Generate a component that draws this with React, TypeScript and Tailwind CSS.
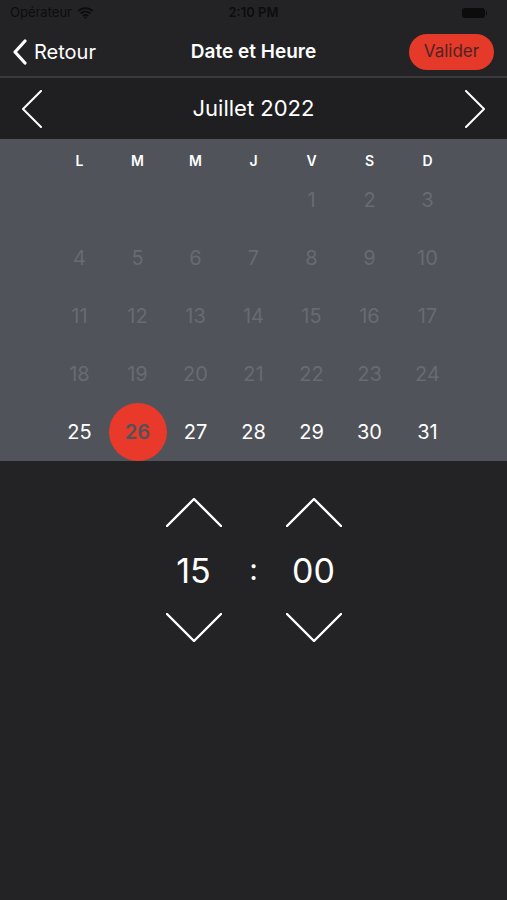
import React from "react";

const days = ["L", "M", "M", "J", "V", "S", "D"];

// July 2022 starts on a Friday (V)
const cells: (number | null)[] = [
  null, null, null, null, 1, 2, 3,
  4, 5, 6, 7, 8, 9, 10,
  11, 12, 13, 14, 15, 16, 17,
  18, 19, 20, 21, 22, 23, 24,
  25, 26, 27, 28, 29, 30, 31,
];

function Chevron({ dir }: { dir: "up" | "down" }) {
  return (
    <svg width="56" height="29" viewBox="0 0 56 29" fill="none">
      <path
        d={dir === "up" ? "M1 28 L28 1 L55 28" : "M1 1 L28 28 L55 1"}
        stroke="white"
        strokeWidth="2.4"
        strokeLinecap="round"
        strokeLinejoin="round"
      />
    </svg>
  );
}

function TimeColumn({ value }: { value: string }) {
  return (
    <div className="flex w-[60px] flex-col items-center">
      <Chevron dir="up" />
      <div className="mt-[24px] flex h-[40px] items-center text-[34px] leading-none text-white">
        {value}
      </div>
      <div className="mt-[22px]">
        <Chevron dir="down" />
      </div>
    </div>
  );
}

export default function App() {
  return (
    <div
      className="flex h-[900px] w-[507px] flex-col bg-[#232325]"
      style={{ fontFamily: "Inter, 'Noto Sans', sans-serif" }}
    >
      {/* status bar */}
      <div className="relative flex h-[28px] items-center px-[10px] pb-[2px] text-[13px] text-[#0c0c0d]">
        <span>Opérateur</span>
        <svg className="ml-[5px]" width="17" height="12" viewBox="0 0 17 12" fill="#0c0c0d">
          <path d="M8.5 2.2c2.5 0 4.8 1 6.5 2.6l1.3-1.4C14.3 1.5 11.5.3 8.5.3S2.7 1.5.7 3.4L2 4.8c1.7-1.6 4-2.6 6.5-2.6z" />
          <path d="M8.5 5.6c1.6 0 3 .6 4.1 1.6l1.3-1.4C12.5 4.5 10.6 3.7 8.5 3.7S4.5 4.5 3.1 5.8l1.3 1.4c1.1-1 2.5-1.6 4.1-1.6z" />
          <path d="M8.5 9c.7 0 1.3.3 1.8.7l1.3-1.4C10.8 7.5 9.7 7.1 8.5 7.1s-2.3.4-3.1 1.2l1.3 1.4c.5-.4 1.1-.7 1.8-.7zM8.5 11.8 10 10.3c-.4-.4-.9-.6-1.5-.6S7.4 9.9 7 10.3z" />
        </svg>
        <span className="absolute left-1/2 -translate-x-1/2 font-semibold">2:10 PM</span>
        <div className="ml-auto mr-[10px] flex items-center">
          <div className="h-[10px] w-[23px] rounded-[3px] bg-[#0c0c0d]" />
          <div className="ml-[1px] h-[4px] w-[1.5px] rounded-r bg-[#0c0c0d]" />
        </div>
      </div>

      {/* nav bar */}
      <div className="relative flex h-[50px] items-center border-b-2 border-[#3a3a3c] px-[12px]">
        <svg width="16" height="26" viewBox="0 0 16 26" fill="none">
          <path d="M13 2 L3 13 L13 24" stroke="white" strokeWidth="3.2" strokeLinecap="round" strokeLinejoin="round" />
        </svg>
        <span className="ml-[6px] text-[20px] text-white">Retour</span>
        <span className="absolute left-1/2 -translate-x-1/2 text-[19px] font-semibold text-white">
          Date et Heure
        </span>
        <button className="ml-auto mr-[1px] flex h-[36px] w-[85px] items-center justify-center rounded-full bg-[#e5392a] text-[17px] text-[#4c2422]">
          Valider
        </button>
      </div>

      {/* month header */}
      <div className="flex h-[61px] items-center justify-between bg-[#1f1f21] px-[21px]">
        <svg width="22" height="38" viewBox="0 0 22 38" fill="none">
          <path d="M20 1 L2 19 L20 37" stroke="white" strokeWidth="2" strokeLinecap="round" strokeLinejoin="round" />
        </svg>
        <span className="text-[22px] text-white">Juillet 2022</span>
        <svg width="22" height="38" viewBox="0 0 22 38" fill="none">
          <path d="M2 1 L20 19 L2 37" stroke="white" strokeWidth="2" strokeLinecap="round" strokeLinejoin="round" />
        </svg>
      </div>

      {/* calendar */}
      <div className="bg-[#50535a] pt-[10px]">
        <div className="mx-auto grid w-[406px] grid-cols-7">
          {days.map((d, i) => (
            <div key={i} className="flex h-[22px] items-center justify-center text-[14px] font-semibold text-white">
              {d}
            </div>
          ))}
          {cells.map((c, i) => (
            <div key={i} className="flex h-[58px] items-center justify-center">
              {c === 26 ? (
                <div className="flex h-[58px] w-[58px] items-center justify-center rounded-full bg-[#e8392a] text-[20px] font-semibold text-[#50535a]">
                  26
                </div>
              ) : c !== null ? (
                <span className={`text-[20px] ${c >= 25 ? "text-white" : "text-[#686b72]"}`}>{c}</span>
              ) : null}
            </div>
          ))}
        </div>
      </div>

      {/* time picker */}
      <div className="flex justify-center pt-[37px]">
        <TimeColumn value="15" />
        <div className="flex w-[60px] items-center justify-center pb-[2px] text-[30px] text-white">:</div>
        <TimeColumn value="00" />
      </div>
    </div>
  );
}
